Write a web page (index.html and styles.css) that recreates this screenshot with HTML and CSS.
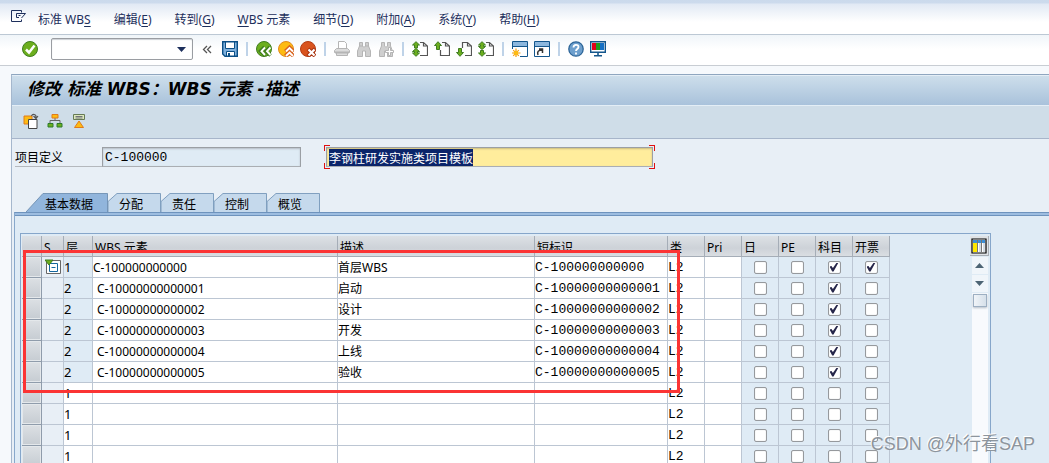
FILE: index.html
```html
<!DOCTYPE html>
<html lang="zh-CN">
<head>
<meta charset="utf-8">
<title>修改 标准 WBS：WBS 元素 -描述</title>
<link rel="stylesheet" href="styles.css">
</head>
<body>
<nav class="menubar">
  <button class="menu-icon" aria-label="菜单"><svg width="16" height="14" viewBox="0 0 16 14" fill="none" stroke="#1d2f5c"><path d="M10.500 2.500V.5H.5v11h10v-2M8 7.500H5.500v-4H14.500l-4 4.500M7.500 5.500h2"/></svg></button>
  <button>标准 WB<u>S</u></button>
  <button>编辑(<u>E</u>)</button>
  <button>转到(<u>G</u>)</button>
  <button><u>W</u>BS 元素</button>
  <button>细节(<u>D</u>)</button>
  <button>附加(<u>A</u>)</button>
  <button>系统(<u>Y</u>)</button>
  <button>帮助(<u>H</u>)</button>
</nav>

<div class="toolbar">
  <button class="enter" aria-label="回车"><svg width="16" height="16" viewBox="0 0 16 16"><circle cx="8" cy="8" r="7.500" fill="#6cae1e" stroke="#3f7d20"/><path d="M4 8.500l3 3 5.500-7" fill="none" stroke="#fff" stroke-width="2.500"/></svg></button>
  <span class="command">
    <select aria-label="命令"><option></option></select>
    <svg class="command-arrow" width="9" height="5" viewBox="0 0 9 5"><path d="M0 0h9L4.500 5z" fill="#1d2f5c"/></svg>
  </span>
  <button class="collapse" aria-label="收起"><svg width="10" height="16" viewBox="0 0 10 16" fill="none" stroke="#555"><path d="M5 5L1.500 8.500 5 12M9 5L5.500 8.500 9 12" stroke-width="1.300"/></svg></button>
  <button aria-label="保存"><svg width="16" height="16" viewBox="0 0 16 16"><path d="M.7.700h14.600v14.600H3L.7 13z" fill="#7fb0dc" stroke="#0b4f86" stroke-width="1.400"/><path d="M3.500 1h9v6.500h-9z" fill="#fff" stroke="#0b4f86"/><path d="M4.500 10.500h8V15h-8z" fill="#fff" stroke="#0b4f86"/><path d="M6 12h2v3H6z" fill="#0b4f86"/></svg></button>
  <span class="sep"></span>
  <button aria-label="返回"><svg width="16" height="16" viewBox="0 0 16 16"><circle cx="8" cy="8" r="7.500" fill="#6cae1e" stroke="#3f7d20"/><path d="M8.500 6l-4 4 4.500 4.500M14 6l-4 4 4.500 4.500" fill="none" stroke="#3f7d20" stroke-width="3.500"/><path d="M9 6.500L5.500 10.200 9 14M14.500 6.500L11 10.200l3.500 3.800" fill="none" stroke="#fff" stroke-width="1.900"/></svg></button>
  <button aria-label="退出"><svg width="16" height="16" viewBox="0 0 16 16"><circle cx="8" cy="8" r="7.500" fill="#fdbb12" stroke="#e08a1e"/><path d="M7.500 10.500l4-4 4 4M7.500 15l4-4 4 4" fill="none" stroke="#d9631e" stroke-width="4"/><path d="M8 10.500L11.500 7l3.500 3.500M8 15l3.500-3.500L15 15" fill="none" stroke="#fff" stroke-width="1.800"/></svg></button>
  <button aria-label="取消"><svg width="16" height="16" viewBox="0 0 16 16"><circle cx="8" cy="8" r="7.500" fill="#d9541e" stroke="#b23c14"/><path d="M8 8l7 7M15 8l-7 7" stroke="#a8320f" stroke-width="4"/><path d="M8.500 8.500l6 6M14.500 8.500l-6 6" stroke="#fff" stroke-width="2.200"/></svg></button>
  <span class="sep"></span>
  <button aria-label="打印"><svg width="16" height="16" viewBox="0 0 16 16" fill="#dcdcdc" stroke="#b5b5b5"><path d="M4.500 7.500v-7h6l2 2v5" fill="#fff"/><path d="M2.500 7.500h11l2 2v2H.5v-2zM2.500 11.500h11v3h-11z"/><path d="M1 11.500h14" stroke-width="2"/></svg></button>
  <button aria-label="查找"><svg width="16" height="16" viewBox="0 0 16 16" fill="#cfcfcf" stroke="#b5b5b5"><path d="M3.500 1.500h3V5l1 1h1l1-1V1.500h3V5l2 5v5.500h-5V10h-3v5.500h-5V10l2-5z"/><path d="M3 5h4M9 5h4"/></svg></button>
  <button aria-label="继续查找"><svg width="16" height="16" viewBox="0 0 16 16" fill="#cfcfcf" stroke="#b5b5b5"><path d="M3.500 1.500h3V5l1 1h1l1-1V1.500h3V5l2 5v5.500h-5V10h-3v5.500h-5V10l2-5z"/><path d="M10.500 6.500h2v3h3v2h-3v3h-2v-3h-3v-2h3z" fill="#fff"/></svg></button>
  <span class="sep"></span>
  <button aria-label="第一页"><svg width="16" height="16" viewBox="0 0 16 16"><path d="M8 1.500h3.500l4 3.500v9.500H8M11.500 1.500V5h4" fill="none" stroke="#555" stroke-width="1.200"/><path d="M4 .7L7.500 4h-2v3h-3V4h-2zM4 15.300L.5 12h2v-1.500h-2L4 7.500l3.500 3h-2V12h2z" fill="#6cae1e" stroke="#3f7d20"/></svg></button>
  <button aria-label="上一页"><svg width="16" height="16" viewBox="0 0 16 16"><path d="M8 1.500h3.500l4 3.500v9.500h-9V9M11.500 1.500V5h4" fill="none" stroke="#555" stroke-width="1.200"/><path d="M4 .7l3.500 3.800h-2v4h-3v-4h-2z" fill="#6cae1e" stroke="#3f7d20"/></svg></button>
  <button aria-label="下一页"><svg width="16" height="16" viewBox="0 0 16 16"><path d="M6.500 7V1.500h5l4 3.500v9.500H9M11.500 1.500V5h4" fill="none" stroke="#555" stroke-width="1.200"/><path d="M4 15.300l3.500-3.800h-2v-4h-3v4h-2z" fill="#6cae1e" stroke="#3f7d20"/></svg></button>
  <button aria-label="最后一页"><svg width="16" height="16" viewBox="0 0 16 16"><path d="M8 1.500h3.500l4 3.500v9.500H8M11.500 1.500V5h4" fill="none" stroke="#555" stroke-width="1.200"/><path d="M4 .7L7.500 4h-2v1.500h2L4 8.500.5 5.500h2V4h-2zM4 15.300L.5 12h2V9.500h3V12h2z" fill="#6cae1e" stroke="#3f7d20"/></svg></button>
  <span class="sep"></span>
  <button aria-label="新建会话"><svg width="16" height="16" viewBox="0 0 16 16"><path d="M.5.5h15v15H.5z" fill="#fff" stroke="#14568c"/><path d="M1 1h14v4H1z" fill="#8db7dd"/><path d="M0 5.500h16" stroke="#14568c"/><path d="M0 8h8v8H0z" fill="#fff"/><path d="M4 7.500v9M0 12h8.500M1.200 9.200l5.600 5.600M6.800 9.200l-5.600 5.600" stroke="#f39c12" stroke-width="1.200"/><circle cx="4" cy="12" r="2.300" fill="#fdbb12"/></svg></button>
  <button aria-label="快捷方式"><svg width="16" height="16" viewBox="0 0 16 16"><path d="M.5.5h15v15H.5z" fill="#fff" stroke="#14568c"/><path d="M1 1h14v4H1z" fill="#8db7dd"/><path d="M0 5.500h16" stroke="#14568c"/><path d="M4 14c-1-3 0-5 4-5M5 8h3.500v4" fill="none" stroke="#333" stroke-width="1.500"/></svg></button>
  <span class="sep"></span>
  <button aria-label="帮助"><svg width="16" height="16" viewBox="0 0 16 16"><circle cx="8" cy="8" r="7.200" fill="#6d9fcd" stroke="#2d6598" stroke-width="1.300"/><path d="M5.500 6.500c0-3.500 5-3.500 5-.5 0 2-2.500 2-2.500 4M8 11.500v2" fill="none" stroke="#fff" stroke-width="1.800"/></svg></button>
  <button aria-label="布局"><svg width="16" height="16" viewBox="0 0 16 16"><path d="M.7.700h14.600v10.600H.7z" fill="#fff" stroke="#14568c" stroke-width="1.400"/><path d="M2 2h4v7H2z" fill="#e2001a"/><path d="M6 2h4v7H6z" fill="#1f9c1f"/><path d="M10 2h4v7h-4z" fill="#1670c4"/><path d="M8 11v4M4 14.800h8" stroke="#14568c" stroke-width="1.600"/></svg></button>
</div>

<main class="screen">
  <header class="title"><h1>修改 标准 WBS：WBS 元素 -描述</h1></header>
  <div class="app-toolbar">
    <button aria-label="复制"><svg width="16" height="16" viewBox="0 0 16 16"><path d="M1 3h8v8H1z" fill="#fdbb12" stroke="#e07b1a"/><path d="M5.500 6.500h8.500v9H5.500z" fill="#fff" stroke="#444"/><path d="M8.500 3c1-2.500 5-2 4.500 1.500M10.500 3l2.500 2.500 2-2.500" fill="none" stroke="#555" stroke-width="1.200"/></svg></button>
    <button aria-label="层次结构"><svg width="16" height="16" viewBox="0 0 16 16"><path d="M8 5v3M3 10V7.500h10V10" fill="none" stroke="#666"/><path d="M5 1.500h6V5H5z" fill="#fdbb12" stroke="#e07b1a"/><path d="M1 10.500h5V14H1zM10 10.500h5V14h-5z" fill="#6cae1e" stroke="#2c7a2c"/></svg></button>
    <button aria-label="概览"><svg width="16" height="16" viewBox="0 0 16 16"><path d="M2.500 1.500h11v5h-11z" fill="#dce8bd" stroke="#667a55"/><path d="M4.500 3.500h7M4.500 5h7" stroke="#556" stroke-width=".8"/><path d="M8 8l4.500 6.500h-9z" fill="#fdbb12" stroke="#e07b1a"/></svg></button>
  </div>

  <div class="project">
    <label for="project-id">项目定义</label>
    <input id="project-id" class="project-id" value="C-100000" readonly>
    <span class="focus-frame"><input id="project-name" class="project-name" aria-label="项目描述" value="李钢柱研发实施类项目模板"></span>
  </div>

  <div class="tabs" role="tablist">
    <button class="tab active" role="tab" aria-selected="true"><svg viewBox="0 0 82 20" preserveAspectRatio="none"><path d="M0 20L17 .5h64.500V20" fill="#91b5dc" stroke="#7393b5"/></svg><span>基本数据</span></button>
    <button class="tab" role="tab"><svg viewBox="0 0 53 20" preserveAspectRatio="none"><path d="M0 20V9L9 .5h43.500V20" fill="#c5d9ec" stroke="#7c9cbd"/></svg><span>分配</span></button>
    <button class="tab" role="tab"><svg viewBox="0 0 53 20" preserveAspectRatio="none"><path d="M0 20V9L9 .5h43.500V20" fill="#c5d9ec" stroke="#7c9cbd"/></svg><span>责任</span></button>
    <button class="tab" role="tab"><svg viewBox="0 0 53 20" preserveAspectRatio="none"><path d="M0 20V9L9 .5h43.500V20" fill="#c5d9ec" stroke="#7c9cbd"/></svg><span>控制</span></button>
    <button class="tab" role="tab"><svg viewBox="0 0 53 20" preserveAspectRatio="none"><path d="M0 20V9L9 .5h43.500V20" fill="#c5d9ec" stroke="#7c9cbd"/></svg><span>概览</span></button>
  </div>

  <section class="panel">
    <div class="grid-frame">
      <table class="wbs">
        <colgroup><col class="c-sel"><col class="c-s"><col class="c-level"><col class="c-wbs"><col class="c-desc"><col class="c-short"><col class="c-flag" span="6"></colgroup>
        <thead>
          <tr><th></th><th>S</th><th>层</th><th>WBS 元素</th><th>描述</th><th>短标识</th><th>类</th><th>Pri</th><th>日</th><th>PE</th><th>科目</th><th>开票</th></tr>
        </thead>
        <tbody>
          <tr class="filled"><td><button aria-label="选择行 1"></button></td><td><svg class="node" width="16" height="16" viewBox="0 0 16 16"><path d="M1.500 1.500h14v13h-14z" fill="#fff" stroke="#666"/><path d="M4.500 4.500h8v8h-8zM6.500 8.500h4" fill="none" stroke="#14669e"/><path d="M0 1h8L4 6z" fill="#6cae1e" stroke="#3f7d20"/></svg></td><td>1</td><td>C-100000000000</td><td>首层WBS</td><td>C-100000000000</td><td>L2</td><td></td><td><input type="checkbox" aria-label="日 1"></td><td><input type="checkbox" aria-label="PE 1"></td><td><input type="checkbox" aria-label="科目 1" checked></td><td><input type="checkbox" aria-label="开票 1" checked></td></tr>
          <tr class="filled child"><td><button aria-label="选择行 2"></button></td><td></td><td>2</td><td>C-10000000000001</td><td>启动</td><td>C-10000000000001</td><td>L2</td><td></td><td><input type="checkbox" aria-label="日 2"></td><td><input type="checkbox" aria-label="PE 2"></td><td><input type="checkbox" aria-label="科目 2" checked></td><td><input type="checkbox" aria-label="开票 2"></td></tr>
          <tr class="filled child"><td><button aria-label="选择行 3"></button></td><td></td><td>2</td><td>C-10000000000002</td><td>设计</td><td>C-10000000000002</td><td>L2</td><td></td><td><input type="checkbox" aria-label="日 3"></td><td><input type="checkbox" aria-label="PE 3"></td><td><input type="checkbox" aria-label="科目 3" checked></td><td><input type="checkbox" aria-label="开票 3"></td></tr>
          <tr class="filled child"><td><button aria-label="选择行 4"></button></td><td></td><td>2</td><td>C-10000000000003</td><td>开发</td><td>C-10000000000003</td><td>L2</td><td></td><td><input type="checkbox" aria-label="日 4"></td><td><input type="checkbox" aria-label="PE 4"></td><td><input type="checkbox" aria-label="科目 4" checked></td><td><input type="checkbox" aria-label="开票 4"></td></tr>
          <tr class="filled child"><td><button aria-label="选择行 5"></button></td><td></td><td>2</td><td>C-10000000000004</td><td>上线</td><td>C-10000000000004</td><td>L2</td><td></td><td><input type="checkbox" aria-label="日 5"></td><td><input type="checkbox" aria-label="PE 5"></td><td><input type="checkbox" aria-label="科目 5" checked></td><td><input type="checkbox" aria-label="开票 5"></td></tr>
          <tr class="filled child"><td><button aria-label="选择行 6"></button></td><td></td><td>2</td><td>C-10000000000005</td><td>验收</td><td>C-10000000000005</td><td>L2</td><td></td><td><input type="checkbox" aria-label="日 6"></td><td><input type="checkbox" aria-label="PE 6"></td><td><input type="checkbox" aria-label="科目 6" checked></td><td><input type="checkbox" aria-label="开票 6"></td></tr>
          <tr><td><button aria-label="选择行 7"></button></td><td></td><td>1</td><td></td><td></td><td></td><td>L2</td><td></td><td><input type="checkbox" aria-label="日 7"></td><td><input type="checkbox" aria-label="PE 7"></td><td><input type="checkbox" aria-label="科目 7"></td><td><input type="checkbox" aria-label="开票 7"></td></tr>
          <tr><td><button aria-label="选择行 8"></button></td><td></td><td>1</td><td></td><td></td><td></td><td>L2</td><td></td><td><input type="checkbox" aria-label="日 8"></td><td><input type="checkbox" aria-label="PE 8"></td><td><input type="checkbox" aria-label="科目 8"></td><td><input type="checkbox" aria-label="开票 8"></td></tr>
          <tr><td><button aria-label="选择行 9"></button></td><td></td><td>1</td><td></td><td></td><td></td><td>L2</td><td></td><td><input type="checkbox" aria-label="日 9"></td><td><input type="checkbox" aria-label="PE 9"></td><td><input type="checkbox" aria-label="科目 9"></td><td><input type="checkbox" aria-label="开票 9"></td></tr>
          <tr><td><button aria-label="选择行 10"></button></td><td></td><td>1</td><td></td><td></td><td></td><td>L2</td><td></td><td><input type="checkbox" aria-label="日 10"></td><td><input type="checkbox" aria-label="PE 10"></td><td><input type="checkbox" aria-label="科目 10"></td><td><input type="checkbox" aria-label="开票 10"></td></tr>
        </tbody>
      </table>
      <div class="scroll">
        <button class="config" aria-label="表格设置"><svg width="16" height="16" viewBox="0 0 16 16"><path d="M1 1h14v14H1z" fill="#fff" stroke="#000" stroke-width="1.200"/><path d="M2 2h12v3H2z" fill="#3d8fd6"/><path d="M2 5h4v9H2z" fill="#ffe800"/><path d="M6.500 2v12M10.500 2v12" stroke="#777"/><path d="M8 5h2v9H8zM12 5h2v9h-2z" fill="#d5dbe2"/></svg></button>
        <button class="arrow" aria-label="向上"><svg width="9" height="5" viewBox="0 0 9 5"><path d="M0 5h9L4.500 0z" fill="#4d6474"/></svg></button>
        <button class="arrow" aria-label="向下"><svg width="9" height="5" viewBox="0 0 9 5"><path d="M0 0h9L4.500 5z" fill="#4d6474"/></svg></button>
        <div class="track"><div class="thumb"></div></div>
      </div>
      <div class="mark"></div>
    </div>
  </section>
</main>
<div class="watermark">CSDN @外行看SAP</div>
<script src="main.js"></script>
</body>
</html>
```
FILE: styles.css
```css
* { box-sizing: border-box; }

body {
  margin: 0;
  height: 100vh;
  overflow: hidden;
  position: relative;
  display: flex;
  flex-direction: column;
  background: #f6f9fc;
  color: #000;
  font: 12px/16px "Noto Sans", "Noto Sans CJK SC", sans-serif;
}

button {
  margin: 0;
  padding: 0;
  border: 0;
  background: none;
  color: inherit;
  font: inherit;
  white-space: nowrap;
}

svg { display: block; }

.menubar {
  flex: none;
  height: 35px;
  display: flex;
  align-items: center;
  gap: 23px;
  padding: 6px 11px 0;
  color: #1d2f5c;
  border-bottom: 1px solid #bcc8d4;
  background: linear-gradient(#cbdaec 0, #cddbed 3px, #e1e9f4 4px, #fff 22px);
}
.menu-icon { margin: 0 -12px 6px 0; }
u { text-underline-offset: 2px; }

.toolbar {
  flex: none;
  height: 31px;
  display: flex;
  align-items: center;
  gap: 6px;
  padding: 0 22px 2px;
  border-bottom: 1px solid #c8cdd3;
  background: linear-gradient(#f0f5f9, #fff 14px);
}
.enter { margin-right: 7px; }
.command { position: relative; width: 142px; }
.command select {
  display: block;
  width: 100%;
  height: 22px;
  border: 1px solid #9a9da2;
  border-radius: 2px;
  background: #fff;
  box-shadow: inset 0 1px 1px #ccd0d5;
  appearance: none;
}
.command-arrow { position: absolute; right: 7px; top: 9px; pointer-events: none; }
.collapse { margin: 0 4px 0 3px; }
.sep { width: 2px; height: 14px; margin: 0 2px; background: #bfd3e8; }

.screen {
  flex: 1;
  min-height: 0;
  display: flex;
  flex-direction: column;
  margin: 8px 0 0 11px;
  border-left: 1px solid #a5b7cd;
  border-top: 1px solid #8fa6bf;
  background: #e8eff6;
}

.title {
  flex: none;
  height: 31px;
  padding: 0 15px;
  display: flex;
  align-items: center;
  border-top: 1px solid #e4eef6;
  border-bottom: 1px solid #e4eef6;
  background: linear-gradient(#cddeeb, #a9c2db);
}
h1 {
  margin: 0 0 4px;
  font: italic bold 17px/24px "DejaVu Sans", "Noto Sans CJK SC", sans-serif;
}

.app-toolbar {
  flex: none;
  height: 33px;
  display: flex;
  align-items: center;
  gap: 8px;
  padding: 0 11px 3px;
  border-bottom: 1px solid #a7b5ca;
  background: #cfdde8;
}

.project {
  flex: none;
  height: 54px;
  display: flex;
  align-items: flex-start;
  padding: 6px 3px 0;
}
.project label {
  width: 87px;
  height: 22px;
  padding-top: 5px;
  border-bottom: 1px solid #b4b8bd;
}
.project input {
  height: 20px;
  padding: 0 2px;
  border: 1px solid #9b9fa4;
  border-bottom-color: #aaaeb3;
  color: #000;
  outline: 0;
}
.project .project-id {
  width: 199px;
  margin: 2px 23px 0 0;
  background: #dfebf5;
  box-shadow: inset 0 1px 2px #b5bcc4;
  font: 13px/16px "Liberation Mono", monospace;
}
.focus-frame {
  --red: linear-gradient(#e01010, #e01010);
  display: flex;
  padding: 2px;
  background:
    var(--red) 0 0 / 6px 1px, var(--red) 0 0 / 1px 6px,
    var(--red) 100% 0 / 6px 1px, var(--red) 100% 0 / 1px 6px,
    var(--red) 0 100% / 6px 1px, var(--red) 0 100% / 1px 6px,
    var(--red) 100% 100% / 6px 1px, var(--red) 100% 100% / 1px 6px;
  background-repeat: no-repeat;
}
.project .project-name {
  width: 327px;
  background: #ffed9c;
  box-shadow: inset 0 1px 2px #c9bb80;
  font: 12px/16px "Noto Sans CJK SC", sans-serif;
}
.project-name::selection { background: #0a246a; color: #fff; }

.tabs {
  flex: none;
  display: flex;
  height: 19px;
  padding-left: 14px;
}
.tab {
  position: relative;
  width: 53px;
  height: 19px;
  padding: 4px 0 0 11px;
  text-align: left;
}
.tab.active { width: 82px; padding-left: 19px; }
.tab svg { position: absolute; inset: 0; width: 100%; height: 100%; }
.tab span { position: relative; }

.panel {
  flex: 1;
  min-height: 0;
  margin-left: 2px;
  padding: 20px 58px 0 5px;
  border-left: 1px solid #88a8cb;
  border-top: 1px solid #6e93bd;
  background: linear-gradient(#9dbde0 0 2px, #6e93bd 2px 3px, #dfebf5 3px);
}
.grid-frame {
  position: relative;
  display: flex;
  justify-content: space-between;
  padding: 2px 1px 0;
  border: 1px solid #86a6ca;
}

.wbs {
  flex: none;
  width: 868px;
  table-layout: fixed;
  border-collapse: separate;
  border-spacing: 0;
}
.c-sel { width: 20px; }
.c-s { width: 22px; }
.c-level { width: 29px; }
.c-wbs { width: 245px; }
.c-desc { width: 197px; }
.c-short { width: 133px; }
.c-flag { width: 37px; }

.wbs th, .wbs td {
  height: 21px;
  padding: 0;
  overflow: hidden;
  text-align: left;
  font-weight: normal;
  white-space: nowrap;
  line-height: 16px;
  border-right: 1px solid #bcc6d3;
  border-bottom: 1px solid #bcc6d3;
  background: #fff;
}
.wbs th {
  padding: 3px 0 0 2px;
  border-color: #a5adb7;
  background: linear-gradient(#dde1e5, #cdd2d8 60%, #dadee2);
}
.wbs td:nth-child(1) { border-color: #8f9cab; background: #d3d8dd; }
.wbs td button {
  display: block;
  width: 100%;
  height: 20px;
  border: 1px solid #e4e8eb;
  background: linear-gradient(#dbdfe3, #c7cdd3);
}
.wbs td:nth-child(2) { background: #e8eff6; }
.filled td:nth-child(3) { background: #dfebf5; }
.wbs td:nth-child(3) { font-size: 13px; }
.wbs td:nth-child(n + 4):nth-child(-n + 7) { padding-top: 2px; }
.child td:nth-child(4) { padding-left: 4px; }
.wbs td:nth-child(6), .wbs td:nth-child(7) {
  font: 13px/16px "Liberation Mono", monospace;
}
.wbs td:nth-child(n + 9) { background: #dfebf5; }
.node { margin-left: 3px; }

.wbs input {
  appearance: none;
  display: block;
  width: 13px;
  height: 13px;
  margin: 0 auto;
  border: 1px solid #96999d;
  border-radius: 2px;
  background: #fff;
  box-shadow: inset 0 0 1px #b9bcc0;
}
.wbs input:checked::before {
  content: "";
  display: block;
  width: 9px;
  height: 9px;
  margin: 1px;
  background: #26264a;
  clip-path: polygon(0 45%, 22% 38%, 38% 62%, 80% 0, 100% 0, 45% 100%, 30% 100%);
}

.scroll {
  display: flex;
  flex-direction: column;
  align-items: center;
  width: 19px;
}
.config {
  width: 19px;
  height: 20px;
  padding: 1px;
  border: 1px solid #a8aeb5;
  border-width: 0 1px 1px 0;
  background: #dfe2e5;
}
.arrow {
  display: grid;
  place-items: center;
  width: 16px;
  height: 17px;
  margin-top: 1px;
  background: #f0f5fa;
}
.track { flex: 1; width: 16px; margin-top: 1px; padding: 1px; background: #f8fafd; }
.thumb {
  height: 13px;
  border: 1px solid #9dafc2;
  background: linear-gradient(90deg, #f0f4f8, #d6e0ea);
  box-shadow: 0 1px 2px #b5bec8;
}

/* red annotation frame over the first six rows */
.mark {
  position: absolute;
  left: 2px;
  top: 16px;
  width: 657px;
  height: 143px;
  border: 3px solid #fb3434;
  pointer-events: none;
}

.watermark {
  position: absolute;
  right: 14px;
  bottom: 6px;
  color: #8d959d;
  font: 18px/26px "Liberation Sans", "Noto Sans CJK SC", sans-serif;
  text-shadow: -1px -1px 0 #fff;
}
```
FILE: main.js
```js
const nameField = document.getElementById("project-name");
nameField.focus();
nameField.select();
```
